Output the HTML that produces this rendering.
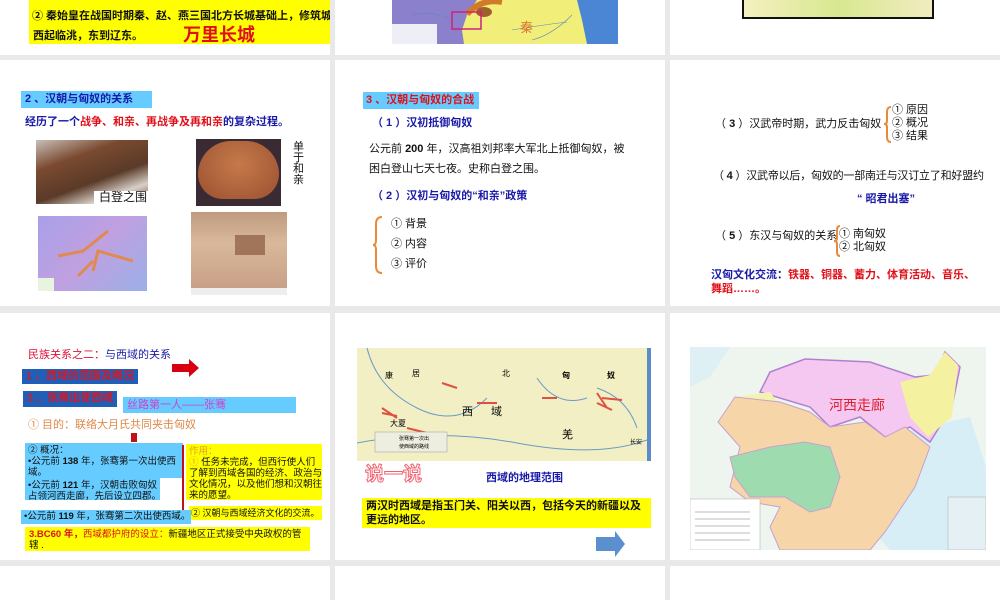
<!DOCTYPE html>
<html><head><meta charset="utf-8"><style>
*{margin:0;padding:0;box-sizing:border-box}
body{width:1000px;height:600px;background:#e9e9e9;position:relative;overflow:hidden;font-family:"Liberation Sans","Noto Sans CJK SC",sans-serif;color:#111}
.t{position:absolute;background:#fff}
.a{position:absolute;white-space:nowrap}
.s10{font-size:11px;line-height:13px}
.b{font-weight:bold}
.blue{color:#1a1aa8}.red{color:#e0101a}
</style></head><body>
<div class="t" style="left:0;top:0;width:330px;height:55px"></div>
<div class="t" style="left:335px;top:0;width:330px;height:55px"></div>
<div class="t" style="left:670px;top:0;width:330px;height:55px"></div>
<div class="t" style="left:0;top:60px;width:330px;height:246px"></div>
<div class="t" style="left:335px;top:60px;width:330px;height:246px"></div>
<div class="t" style="left:670px;top:60px;width:330px;height:246px"></div>
<div class="t" style="left:0;top:313px;width:330px;height:247px"></div>
<div class="t" style="left:335px;top:313px;width:330px;height:247px"></div>
<div class="t" style="left:670px;top:313px;width:330px;height:247px"></div>
<div class="t" style="left:0;top:566px;width:330px;height:34px"></div>
<div class="t" style="left:335px;top:566px;width:330px;height:34px"></div>
<div class="t" style="left:670px;top:566px;width:330px;height:34px"></div>

<!-- row1 tile1 -->
<div class="a" style="left:29px;top:0;width:301px;height:44px;background:#ffff00"></div>
<div class="a s10 b" style="left:32px;top:10px;overflow:hidden;width:298px">② 秦始皇在战国时期秦、赵、燕三国北方长城基础上，修筑城</div>
<div class="a s10 b" style="left:33px;top:30px">西起临洮，东到辽东。</div>
<div class="a b" style="left:183px;top:21px;font-size:18px;color:#e0101a">万里长城</div>
<!-- row1 tile2 map -->
<svg class="a" style="left:392px;top:0" width="226" height="44" viewBox="0 0 226 44">
<rect width="226" height="44" fill="#f2ee7a"/>
<polygon points="0,0 85,0 75,15 70,30 72,44 0,44" fill="#8a80cc"/>
<polygon points="185,0 226,0 226,44 195,44 190,20" fill="#4a86d4"/>
<path d="M75,14 Q90,-2 110,2" stroke="#d07a2a" stroke-width="6" fill="none"/>
<ellipse cx="92" cy="12" rx="8" ry="5" fill="#a0602a"/>
<rect x="60" y="12" width="29" height="17" fill="none" stroke="#d0207a" stroke-width="1.5"/>
<text x="128" y="32" font-size="13" fill="#e07020" font-family="Noto Sans CJK SC">秦</text>
<rect x="0" y="24" width="45" height="20" fill="#eeeef6"/>
<path d="M120,30 Q150,25 175,22 M140,40 Q160,35 180,15 M20,15 Q40,10 60,20" stroke="#5a8ab8" fill="none" stroke-width="0.6"/>
</svg>
<div class="a" style="left:742px;top:0;width:192px;height:19px;border:2px solid #111;border-top:none;background:linear-gradient(90deg,#f4f0c0,#d8e890 50%,#f0ecc0)"></div>

<!-- row2 tile1 -->
<div class="a s10 b" style="left:21px;top:91px;width:131px;height:17px;background:#66ccff;color:#1a1aa8;padding:2px 4px">2 、汉朝与匈奴的关系</div>
<div class="a s10 b" style="left:25px;top:116px"><span class="blue">经历了一个</span><span class="red">战争、和亲、再战争及再和亲</span><span class="blue">的复杂过程。</span></div>
<div class="a" style="left:36px;top:140px;width:112px;height:64px;background:linear-gradient(160deg,#c8c0b8 0%,#7a4a30 30%,#5a3a28 60%,#d8d0c8 80%,#6a4030)"></div>
<div class="a s10" style="left:94px;top:191px;width:54px;height:14px;background:#fff;padding-left:5px;font-size:12px">白登之围</div>
<div class="a" style="left:196px;top:139px;width:85px;height:67px;background:#3a2a34"></div>
<div class="a" style="left:198px;top:141px;width:81px;height:58px;border-radius:40px 40px 30px 30px;background:radial-gradient(ellipse at 50% 40%,#c67a4a,#9a5030)"></div>
<div class="a s10" style="left:293px;top:142px;white-space:normal;width:12px;line-height:11px">单于和亲</div>
<div class="a" style="left:38px;top:216px;width:109px;height:75px;background:linear-gradient(135deg,#a8a0e8,#c0a0e0 50%,#9ab0e8)"></div>
<svg class="a" style="left:38px;top:216px" width="109" height="75"><path d="M20,40 L45,35 L70,15 M55,55 L60,35 L95,45 M40,60 L55,45" stroke="#e08a50" stroke-width="3" fill="none"/><rect x="0" y="62" width="16" height="13" fill="#e8f4e0"/></svg>
<div class="a" style="left:191px;top:212px;width:96px;height:83px;background:linear-gradient(180deg,#c09a80,#d8b89a 40%,#c8a088);border-bottom:7px solid #eee"></div>
<div class="a" style="left:235px;top:235px;width:30px;height:20px;background:#8a5a40;opacity:.7"></div>

<!-- row2 tile2 -->
<div class="a s10 b" style="left:363px;top:92px;width:116px;height:17px;background:#66ccff;color:#e0101a;padding:2px 3px">3 、汉朝与匈奴的合战</div>
<div class="a s10 b blue" style="left:372px;top:117px">（ 1 ）汉初抵御匈奴</div>
<div class="a s10" style="left:369px;top:143px">公元前 <b>200</b> 年，汉高祖刘邦率大军北上抵御匈奴，被</div>
<div class="a s10" style="left:369px;top:163px">困白登山七天七夜。史称白登之围。</div>
<div class="a s10 b blue" style="left:372px;top:190px">（ 2 ）汉初与匈奴的“和亲”政策</div>
<svg class="a" style="left:372px;top:216px" width="12" height="58"><path d="M10,1 Q4,1 4,8 L4,24 Q4,29 1,29 Q4,29 4,34 L4,50 Q4,57 10,57" stroke="#e88a3a" stroke-width="2" fill="none"/></svg>
<div class="a s10" style="left:391px;top:218px">① 背景</div>
<div class="a s10" style="left:391px;top:238px">② 内容</div>
<div class="a s10" style="left:391px;top:258px">③ 评价</div>

<!-- row2 tile3 -->
<div class="a s10" style="left:715px;top:118px">（ <b>3</b> ）汉武帝时期，武力反击匈奴</div>
<svg class="a" style="left:883px;top:106px" width="10" height="37"><path d="M8,1 Q4,1 4,6 L4,15 Q4,18 1,18 Q4,18 4,21 L4,31 Q4,36 8,36" stroke="#e88a3a" stroke-width="2" fill="none"/></svg>
<div class="a s10" style="left:892px;top:104px;line-height:13px">① 原因<br>② 概况<br>③ 结果</div>
<div class="a s10" style="left:713px;top:170px;letter-spacing:-0.2px">（ <b>4</b> ）汉武帝以后，匈奴的一部南迁与汉订立了和好盟约</div>
<div class="a s10 b blue" style="left:857px;top:193px">“ 昭君出塞”</div>
<div class="a s10" style="left:715px;top:230px">（ <b>5</b> ）东汉与匈奴的关系</div>
<svg class="a" style="left:833px;top:225px" width="8" height="32"><path d="M7,1 Q4,1 4,5 L4,13 Q4,16 1,16 Q4,16 4,19 L4,27 Q4,31 7,31" stroke="#e88a3a" stroke-width="2" fill="none"/></svg>
<div class="a s10" style="left:839px;top:228px;line-height:13px">① 南匈奴<br>② 北匈奴</div>
<div class="a s10 b" style="left:711px;top:268px;line-height:14px"><span class="blue">汉匈文化交流：</span><span class="red">铁器、铜器、蓄力、体育活动、音乐、<br>舞蹈……。</span></div>

<!-- row3 tile1 -->
<div class="a s10" style="left:28px;top:349px"><span style="color:#e0103a">民族关系之二：</span><span class="blue">与西域的关系</span></div>
<svg class="a" style="left:172px;top:359px" width="28" height="19"><polygon points="0,5 17,5 17,0 27,9 17,18 17,13 0,13" fill="#d80010"/></svg>
<div class="a s10 b" style="left:22px;top:369px;width:116px;height:15px;background:#1f5fb8;color:#d01a2a;padding:1px 4px">1 、西域的范围及概况</div>
<div class="a s10 b" style="left:23px;top:391px;width:94px;height:16px;background:#1f5fb8;color:#d01a2a;padding:1px 4px">2 、张骞出使西域</div>
<div class="a s10" style="left:123px;top:397px;width:173px;height:16px;background:#66ccff;color:#d040d0;padding:2px 4px">丝路第一人——张骞</div>
<div class="a s10" style="left:28px;top:419px;color:#e0884a">① 目的：联络大月氏共同夹击匈奴</div>
<div class="a" style="left:131px;top:433px;width:6px;height:9px;background:#c0101a"></div>
<div class="a" style="left:25px;top:443px;width:158px;height:35px;background:#66ccff"></div>
<div class="a" style="left:25px;top:478px;width:135px;height:22px;background:#66ccff"></div>
<div class="a" style="left:28px;top:445px;font-size:9.5px;line-height:11px">② 概况：<br>•公元前 <b>138</b> 年，张骞第一次出使西<br>域。</div>
<div class="a" style="left:28px;top:480px;font-size:9.5px;line-height:11px">•公元前 <b>121</b> 年，汉朝击败匈奴<br>占领河西走廊，先后设立四郡。</div>
<div class="a" style="left:182px;top:445px;width:2px;height:76px;background:#c0101a"></div>
<div class="a" style="left:186px;top:444px;width:136px;height:56px;background:#ffff00"></div>
<div class="a" style="left:189px;top:446px;font-size:9.5px;line-height:11px"><span style="color:#e0a020">作用：<br>①</span> 任务未完成，但西行使人们<br>了解到西域各国的经济、政治与<br>文化情况，以及他们想和汉朝往<br>来的愿望。</div>
<div class="a" style="left:189px;top:506px;width:133px;height:14px;background:#ffff00;font-size:9px;line-height:14px;padding-left:2px">② 汉朝与西域经济文化的交流。</div>
<div class="a" style="left:21px;top:510px;width:170px;height:14px;background:#66ccff;font-size:9.5px;line-height:14px;padding-left:3px">•公元前 <b>119</b> 年，张骞第二次出使西域。</div>
<div class="a" style="left:25px;top:527px;width:285px;height:24px;background:#ffff00;font-size:9.5px;line-height:11px;padding:2px 4px"><b style="color:#e0101a">3.BC60 年，</b><span style="color:#e0101a">西域都护府的设立：</span>新疆地区正式接受中央政权的管<br>辖 .</div>

<!-- row3 tile2 -->
<svg class="a" style="left:357px;top:348px" width="294" height="113" viewBox="0 0 294 113">
<rect width="294" height="113" fill="#f3efc4"/>
<rect x="290" y="0" width="4" height="113" fill="#5a8ac8"/>
<path d="M10,0 Q20,40 60,60 T130,50 M180,30 Q200,60 230,50 M240,40 Q270,50 280,80 M0,95 Q80,80 160,95 T290,92" stroke="#6a9ac8" fill="none" stroke-width="1"/>
<g stroke="#e05040" stroke-width="2" fill="none"><path d="M40,70 L25,60 M50,80 L70,85 M100,40 L85,35 M140,55 L120,55 M200,50 L185,50 M265,52 L245,50 M240,55 L255,62 M250,60 L240,45 M25,65 L40,68"/></g>
<text x="28" y="30" font-size="8" font-family="Noto Sans CJK SC">康</text>
<text x="55" y="28" font-size="8" font-family="Noto Sans CJK SC">居</text>
<text x="145" y="28" font-size="8" font-family="Noto Sans CJK SC">北</text>
<text x="105" y="67" font-size="11" font-family="Noto Sans CJK SC">西</text>
<text x="134" y="67" font-size="11" font-family="Noto Sans CJK SC">域</text>
<text x="33" y="78" font-size="8" font-family="Noto Sans CJK SC">大夏</text>
<text x="205" y="30" font-size="8" font-weight="bold" font-family="Noto Sans CJK SC">匈</text>
<text x="250" y="30" font-size="8" font-weight="bold" font-family="Noto Sans CJK SC">奴</text>
<text x="205" y="90" font-size="11" font-family="Noto Sans CJK SC">羌</text>
<text x="273" y="96" font-size="6" font-family="Noto Sans CJK SC">长安</text>
<rect x="18" y="84" width="72" height="20" fill="#eeeee0" stroke="#999" stroke-width=".5"/>
<text x="42" y="92" font-size="5" font-family="Noto Sans CJK SC">张骞第一次出</text>
<text x="42" y="100" font-size="5" font-family="Noto Sans CJK SC">使西域的路线</text>
</svg>
<div class="a" style="left:365px;top:461px;font-size:19px;font-weight:bold;color:#fff;-webkit-text-stroke:1px #f06070;font-family:'Noto Sans CJK SC',sans-serif;line-height:24px">说一说</div>
<div class="a s10 b blue" style="left:486px;top:472px">西域的地理范围</div>
<div class="a" style="left:362px;top:498px;width:289px;height:30px;background:#ffff00;font-size:11px;line-height:14px;padding:1px 4px;font-weight:bold">两汉时西域是指玉门关、阳关以西，包括今天的新疆以及<br>更远的地区。</div>
<svg class="a" style="left:596px;top:531px" width="30" height="26"><polygon points="0,6 19,6 19,0 29,13 19,26 19,20 0,20" fill="#5a8fd0"/></svg>

<!-- row3 tile3 map -->
<svg class="a" style="left:690px;top:347px" width="296" height="203" viewBox="0 0 296 203">
<rect width="296" height="203" fill="#eef4ee"/>
<polygon points="150,120 190,90 280,70 296,120 296,203 200,203 170,170" fill="#d8eef6"/>
<polygon points="0,0 40,0 20,30 0,40" fill="#dff0f4"/>
<polygon points="70,45 80,25 115,12 180,15 225,30 245,28 255,5 270,20 262,60 240,95 220,80 195,90 170,70 140,80 120,60" fill="#f4c8f0" stroke="#b080d0" stroke-width="1.5"/>
<polygon points="210,35 240,28 255,5 268,18 262,70 238,90 220,70" fill="#f4f2a0"/>
<polygon points="45,50 80,45 95,65 40,72" fill="#f4f2b0"/>
<polygon points="28,75 45,50 90,55 120,65 140,80 175,75 195,90 215,80 240,100 225,140 195,185 180,203 90,203 80,180 90,160 60,155 40,140 50,100" fill="#f6d6a8" stroke="#c8a0d0" stroke-width="1"/>
<polygon points="40,110 80,100 115,95 140,100 150,130 140,160 120,165 95,150 60,150 45,130" fill="#9edcb0" stroke="#c8a0d0"/>
<rect x="0" y="152" width="70" height="51" fill="#ffffff" stroke="#aaa" stroke-width=".5"/>
<g stroke="#bbb" stroke-width="1"><path d="M5,165 H60 M5,172 H60 M5,179 H60 M5,186 H60 M5,193 H60"/></g>
<rect x="258" y="150" width="38" height="53" fill="#e4f0f4" stroke="#aaa" stroke-width=".5"/>
<text x="139" y="63" font-size="14" fill="#e02030" font-family="Noto Sans CJK SC">河西走廊</text>
</svg>
</body></html>
